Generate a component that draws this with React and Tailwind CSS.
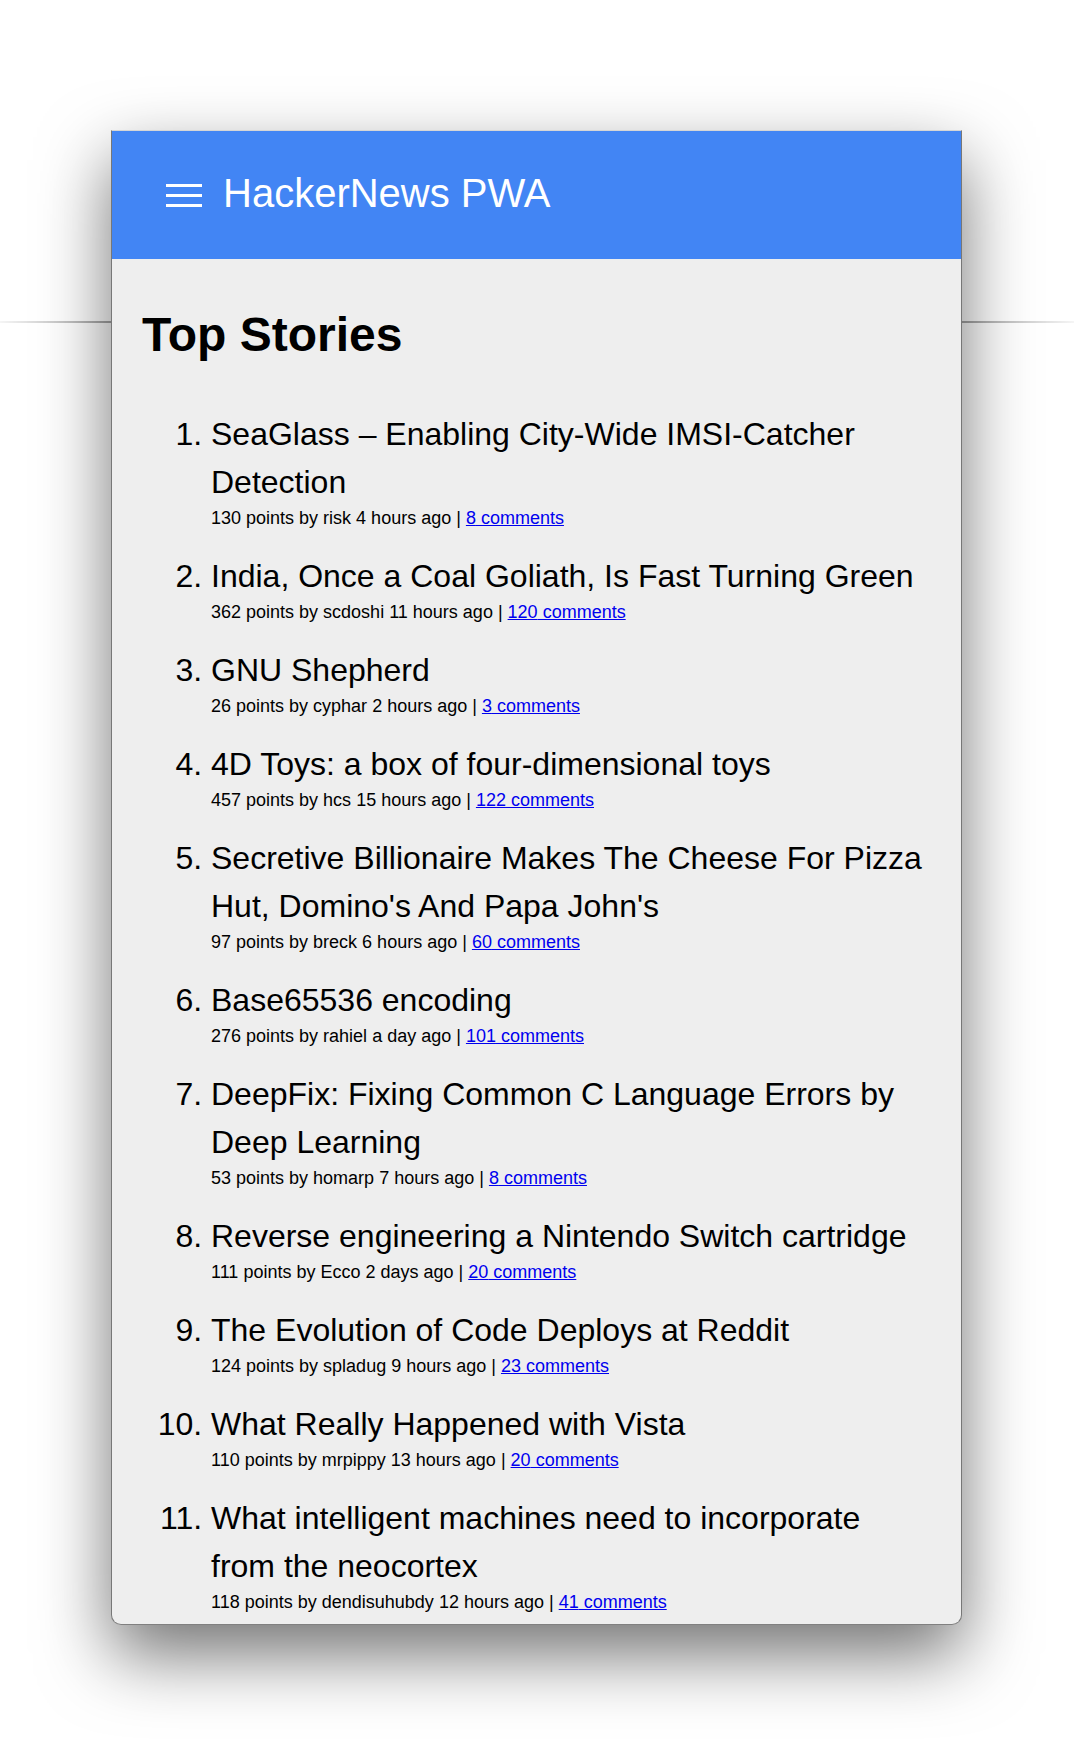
import React from 'react';

const stories = [
  { title: 'SeaGlass – Enabling City-Wide IMSI-Catcher Detection', points: 130, user: 'risk', ago: '4 hours ago', comments: 8 },
  { title: 'India, Once a Coal Goliath, Is Fast Turning Green', points: 362, user: 'scdoshi', ago: '11 hours ago', comments: 120 },
  { title: 'GNU Shepherd', points: 26, user: 'cyphar', ago: '2 hours ago', comments: 3 },
  { title: '4D Toys: a box of four-dimensional toys', points: 457, user: 'hcs', ago: '15 hours ago', comments: 122 },
  { title: "Secretive Billionaire Makes The Cheese For Pizza Hut, Domino's And Papa John's", points: 97, user: 'breck', ago: '6 hours ago', comments: 60 },
  { title: 'Base65536 encoding', points: 276, user: 'rahiel', ago: 'a day ago', comments: 101 },
  { title: 'DeepFix: Fixing Common C Language Errors by Deep Learning', points: 53, user: 'homarp', ago: '7 hours ago', comments: 8 },
  { title: 'Reverse engineering a Nintendo Switch cartridge', points: 111, user: 'Ecco', ago: '2 days ago', comments: 20 },
  { title: 'The Evolution of Code Deploys at Reddit', points: 124, user: 'spladug', ago: '9 hours ago', comments: 23 },
  { title: 'What Really Happened with Vista', points: 110, user: 'mrpippy', ago: '13 hours ago', comments: 20 },
  { title: 'What intelligent machines need to incorporate from the neocortex', points: 118, user: 'dendisuhubdy', ago: '12 hours ago', comments: 41 },
];

function MenuIcon() {
  return (
    <svg width="36" height="23" viewBox="0 0 36 23" className="shrink-0">
      <rect x="0" y="0" width="36" height="3" fill="#fff" />
      <rect x="0" y="10" width="36" height="3" fill="#fff" />
      <rect x="0" y="20" width="36" height="3" fill="#fff" />
    </svg>
  );
}

export default function App() {
  return (
    <div className="relative min-h-[1745px] overflow-hidden bg-white pt-[130px] font-['Liberation_Sans',Arial,sans-serif] text-black">
      {/* faint rule behind the window */}
      <div className="absolute left-0 right-0 top-[321px] h-[2px] bg-[linear-gradient(to_right,rgba(0,0,0,0.04),rgba(0,0,0,0.35)_10%,rgba(0,0,0,0.35)_90%,rgba(0,0,0,0.04))]" />

      <div className="relative z-10 ml-[111px] flex h-[1495px] w-[851px] flex-col overflow-hidden rounded-b-[10px] border-x border-b border-t border-x-[#777] border-b-[#808080] border-t-[#d6d6d6] bg-[#eeeeee] shadow-[0_30px_70px_rgba(0,0,0,0.55)]">
        <header className="flex h-[128px] shrink-0 items-center bg-[#4285f4] pl-[54px]">
          <MenuIcon />
          <span className="mb-[4px] ml-[21px] text-[40px] leading-[40px] text-white">HackerNews PWA</span>
        </header>

        <main className="px-[30px] pt-[48px]">
          <h2 className="text-[48px] font-bold leading-[56px]">Top Stories</h2>
          <ol className="mt-[47px] list-outside list-decimal pl-[69px] pr-[4px]">
            {stories.map((s, i) => (
              <li key={i} className="mb-[21px] text-[32px] leading-[48px]">
                <div>{s.title}</div>
                <div className="text-[18px] leading-[25px]">
                  {s.points} points by {s.user} {s.ago} |{' '}
                  <a href="#" className="text-[#0000ee] underline">
                    {s.comments} comments
                  </a>
                </div>
              </li>
            ))}
          </ol>
        </main>
      </div>
    </div>
  );
}
